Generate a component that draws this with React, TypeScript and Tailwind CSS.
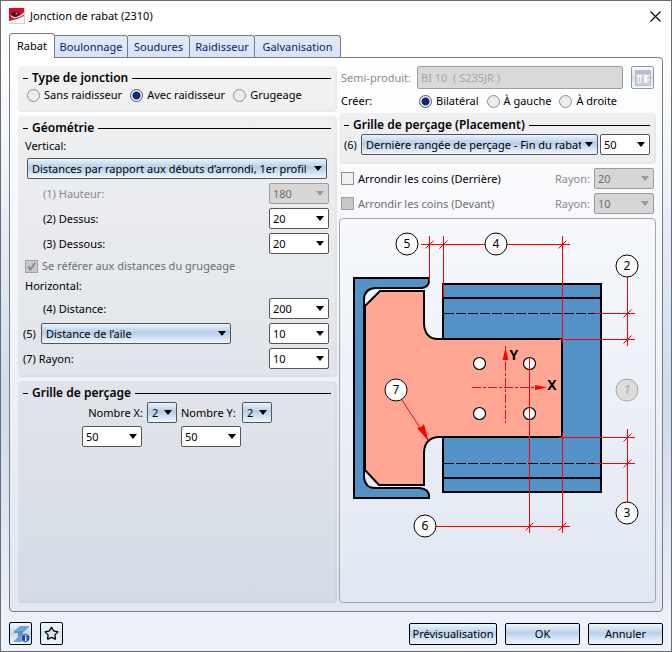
import React from 'react'
import { Star } from 'lucide-react'
import clsx from 'clsx'

interface DropDownProps {
  label: string
  value: string
  variant?: 'edit' | 'list'
  disabled?: boolean
  className?: string
}

function DropDown({ label, value, variant = 'edit', disabled = false, className }: DropDownProps) {
  return (
    <div className={clsx('grid h-[21px] items-center', className)}>
      <select
        aria-label={label}
        disabled={disabled}
        className={clsx(
          '[grid-area:1/1] h-full w-full min-w-0 appearance-none rounded-[2px] border pr-4 leading-4 opacity-100 outline-none',
          variant === 'list' ? 'pl-1' : 'pl-[3px]',
          disabled && 'border-[#9c9c9c] bg-[#d6d6d6] text-[#6d6d6d]',
          !disabled && variant === 'edit' && 'border-[#555] bg-white text-black',
          !disabled &&
            variant === 'list' &&
            'border-[#555] bg-linear-to-b from-[#e9f2fa] from-0% via-[#b5cee9] via-45% to-[#eef8fe] to-100% text-black'
        )}
      >
        <option>{value}</option>
      </select>
      <svg
        viewBox="0 0 8 5"
        className={clsx(
          'pointer-events-none [grid-area:1/1] mr-[5px] h-[5px] w-2 justify-self-end',
          disabled ? 'fill-[#9a9a9a]' : 'fill-black'
        )}
      >
        <path d="M0 0h8L4 5z" />
      </svg>
    </div>
  )
}

function Radio({ name, label, defaultChecked }: { name: string; label: string; defaultChecked?: boolean }) {
  return (
    <label className="flex items-center gap-1 whitespace-nowrap">
      <input
        type="radio"
        name={name}
        defaultChecked={defaultChecked}
        className="size-[13px] shrink-0 appearance-none rounded-full border border-[#8e8e8e] bg-[#ececec] checked:border-[#555] checked:bg-[radial-gradient(circle,#10277a_0_3.5px,#f4f4f4_4.5px)]"
      />
      {label}
    </label>
  )
}

function Check({ label, checked, disabled }: { label: string; checked?: boolean; disabled?: boolean }) {
  return (
    <label className={clsx('flex items-center gap-1 whitespace-nowrap', disabled && 'text-[#6d6d6d]')}>
      <span className="grid size-[13px] shrink-0">
        <input
          type="checkbox"
          defaultChecked={checked}
          disabled={disabled}
          className={clsx(
            '[grid-area:1/1] size-[13px] appearance-none border',
            disabled ? 'border-[#a0a0a0] bg-[#c8c8c8]' : 'border-[#8e8e8e] bg-[#f0f0f0]'
          )}
        />
        {checked && (
          <svg viewBox="0 0 13 13" className="pointer-events-none [grid-area:1/1] size-[13px]">
            <path d="M3 6.5l2.5 3L10 3" fill="none" stroke="#8a8a8a" strokeWidth="2" />
          </svg>
        )}
      </span>
      {label}
    </label>
  )
}

function Group({ title, className, children }: { title: string; className?: string; children: React.ReactNode }) {
  return (
    <section
      className={clsx(
        'rounded-[4px] border border-r-2 border-b-2 border-black/5 border-r-black/8 border-b-black/8 bg-black/5 bg-clip-padding pt-[2px] pr-1 pl-1',
        className
      )}
    >
      <h2 className="flex h-[18px] items-center gap-1 text-[12px] font-semibold whitespace-nowrap">
        <span className="h-px w-[5px] bg-black" />
        {title}
        <span className="h-px flex-1 bg-black" />
      </h2>
      {children}
    </section>
  )
}

function Field({ text, value, disabled, indent }: { text: string; value: string; disabled?: boolean; indent?: boolean }) {
  return (
    <div className="mr-[2px] flex items-center justify-between">
      <span className={clsx(indent && 'pl-5', disabled && 'text-[#8a8a8a]')}>{text}</span>
      <DropDown label={text} value={value} disabled={disabled} className="w-15" />
    </div>
  )
}

function DialogButton({ children }: { children: React.ReactNode }) {
  return (
    <button className="h-[22px] min-w-[75px] rounded-[2px] border border-black bg-linear-to-b from-[#f1f7fc] from-0% via-[#b9d1ea] via-45% to-[#eef8fe] to-100% px-[2px] leading-4">
      {children}
    </button>
  )
}

const balloons = [
  { n: 5, x: 407, y: 244 },
  { n: 4, x: 496, y: 244 },
  { n: 2, x: 627, y: 266 },
  { n: 3, x: 627, y: 513 },
  { n: 6, x: 425, y: 526 },
  { n: 7, x: 396, y: 390 }
]

const holes = [
  [479.5, 363.5],
  [529.5, 363.5],
  [479.5, 413.5],
  [529.5, 413.5]
]

const ticks = [
  [429.5, 244.5],
  [443.5, 244.5],
  [562.5, 244.5],
  [627.5, 313.5],
  [627.5, 339.5],
  [627.5, 437.5],
  [627.5, 463.5],
  [529.5, 526.5],
  [562.5, 526.5]
]

function JointDrawing() {
  return (
    <svg viewBox="341 219 314 382" className="h-[382px] w-[314px] shrink-0" role="img" aria-label="Jonction de rabat">
      {/* channel section */}
      <path
        d="M354 278H429V282Q428 287 422 288H375Q364 289 364 300V477Q365 488 375 488H420Q428 489 429 495V498H354Z"
        fill="#5292c6"
        stroke="#000"
        strokeWidth="2"
      />
      {/* beam */}
      <path d="M443 284H601V492H443Z" fill="#5292c6" stroke="#000" strokeWidth="2" />
      <path d="M443 298H601M443 478H601" stroke="#000" strokeWidth="2" />
      <path d="M444 313.5H594M444 463.5H594" stroke="#000" strokeDasharray="10 2" />
      {/* flap plate */}
      <path
        d="M365 306L380 291H424V324Q425 339 438 339H562V437H438Q425 438 424 452V485H379L365 470Z"
        fill="#ffa794"
        stroke="#000"
        strokeWidth="2"
      />
      {holes.map(([x, y]) => (
        <circle key={`${x}-${y}`} cx={x} cy={y} r="6" fill="#fff" stroke="#000" strokeWidth="1.2" />
      ))}
      {/* local axes */}
      <path d="M505.5 346V423M472 387.5H535" stroke="#f00" strokeDasharray="9 2 3 2" fill="none" />
      <path d="M505.5 348L508.5 360H502.5ZM547 387.5L535 385V390Z" fill="#f00" />
      <g fontWeight="700" fontSize="14" textAnchor="middle">
        <text x="514" y="360">Y</text>
        <text x="552" y="390">X</text>
      </g>
      {/* dimension lines */}
      <path
        d="M421 244.5H485M507 244.5H570M429.5 236V282M443.5 236V298M562.5 236V343M627.5 277V346M594 313.5H635M559 339.5H635M559 437.5H635M594 463.5H635M627.5 429V502M436 526.5H570M529.5 357V533M562.5 433V533"
        stroke="#f00"
        fill="none"
      />
      {ticks.map(([x, y]) => (
        <path key={`${x}-${y}`} d={`M${x - 4} ${y + 4}L${x + 4} ${y - 4}`} stroke="#f00" />
      ))}
      <path d="M402 400L428 440" stroke="#f00" />
      <path d="M428.5 441L417 428L421 427L424 424Z" fill="#f00" />
      {balloons.map((b) => (
        <g key={b.n}>
          <circle cx={b.x} cy={b.y} r="11" fill="#fff" stroke="#000" />
          <text x={b.x} y={b.y + 4} textAnchor="middle" fontSize="12">
            {b.n}
          </text>
        </g>
      ))}
      <circle cx="627" cy="390" r="11" fill="#dcdcdc" stroke="#a5a5a5" />
      <text x="627" y="394" textAnchor="middle" fontSize="12" fontStyle="italic" fill="#a5a5a5">
        1
      </text>
    </svg>
  )
}

function AppLogo() {
  return (
    <svg viewBox="0 0 16 16" className="size-4">
      <path d="M0 0h16v16H0z" fill="#d0d0d0" />
      <path d="M0 0h15v15H0z" fill="#d80a2c" />
      <path d="M5 8Q9 10 15 4V7Q10 10 5 10.5Q2 9 1 7Z" fill="#f3dcdc" />
      <path d="M0 15V13Q8 12 15 8V15Z" fill="#fff" />
      <path d="M2 7Q4 3 8 3.500Q11 5 10 7Q8 9.500 5 9Z" fill="#2a2022" />
      <circle cx="7.5" cy="5.5" r="1" fill="#b8b0b0" />
    </svg>
  )
}

const tabs = ['Boulonnage', 'Soudures', 'Raidisseur', 'Galvanisation']

export default function App() {
  return (
    <div className="flex min-h-screen flex-col border border-[#6b6b6b] bg-linear-to-b from-white from-8% via-[#cddaf0] via-62% to-[#edf2fa] to-97% px-2 pb-[6px] font-['Noto_Sans','Open_Sans',sans-serif] text-[11px] leading-4 text-black">
      <header className="flex h-[30px] items-center gap-[5px]">
        <AppLogo />
        <h1 className="flex-1">Jonction de rabat (2310)</h1>
        <button aria-label="Fermer" className="mr-[2px]">
          <svg viewBox="0 0 11 11" className="size-[11px]">
            <path d="M.5.5l10 10M10.5.5l-10 10" stroke="#000" strokeWidth="1.1" />
          </svg>
        </button>
      </header>

      <nav role="tablist" className="mt-[2px] flex h-6 items-end">
        <button
          role="tab"
          aria-selected="true"
          className="z-10 -mb-px h-[25px] w-[46px] shrink-0 rounded-t-[4px] border border-b-0 border-[#7b7b7b] bg-white"
        >
          Rabat
        </button>
        {tabs.map((t) => (
          <button
            key={t}
            role="tab"
            aria-selected="false"
            className={clsx(
              'h-[22px] shrink-0 rounded-tr-[3px] border border-b-0 border-l-0 border-[#7b7b7b] bg-linear-to-b from-[#e4e9f3] to-[#d6e3ff] text-[#0a1a6e]',
              t === 'Boulonnage' && 'w-[73px]',
              t === 'Soudures' && 'w-[62px]',
              t === 'Raidisseur' && 'w-[65px]',
              t === 'Galvanisation' && 'w-[86px]'
            )}
          >
            {t}
          </button>
        ))}
      </nav>

      <main className="grid flex-1 grid-cols-[319fr_317fr] gap-[2px] rounded-[4px] rounded-tl-none border border-[#7b7b7b] bg-linear-to-b from-white to-[#e0e7f2] py-2 pr-[6px] pl-2">
        <div className="flex flex-col gap-1">
          <Group title="Type de jonction" className="h-[46px]">
            <div className="flex gap-2 pl-1">
              <Radio name="type" label="Sans raidisseur" />
              <Radio name="type" label="Avec raidisseur" defaultChecked />
              <Radio name="type" label="Grugeage" />
            </div>
          </Group>

          <Group title="Géométrie" className="pb-[6px]">
            <div className="flex flex-col gap-1">
              <p className="flex h-[17px] items-end pl-[2px]">Vertical:</p>
              <DropDown
                variant="list"
                label="Vertical"
                value="Distances par rapport aux débuts d’arrondi, 1er profil"
                className="mr-1 ml-1"
              />
              <Field text="(1) Hauteur:" value="180" disabled indent />
              <Field text="(2) Dessus:" value="20" indent />
              <Field text="(3) Dessous:" value="20" indent />
              <div className="flex h-4 items-center pl-[2px]">
                <Check label="Se référer aux distances du grugeage" checked disabled />
              </div>
              <p className="h-4 pl-[2px]">Horizontal:</p>
              <Field text="(4) Distance:" value="200" indent />
              <div className="mr-[2px] flex items-center">
                <span className="w-[18px]">(5)</span>
                <DropDown variant="list" label="Référence (5)" value="Distance de l’aile" className="w-[190px]" />
                <DropDown label="(5)" value="10" className="ml-auto w-15" />
              </div>
              <Field text="(7) Rayon:" value="10" />
            </div>
          </Group>

          <Group title="Grille de perçage" className="flex-1">
            <div className="ml-[59px] flex gap-[39px]">
              <div className="w-15">
                <div className="flex w-[95px] items-center justify-end gap-1 whitespace-nowrap">
                  Nombre X:
                  <DropDown variant="list" label="Nombre X" value="2" className="w-[30px] shrink-0" />
                </div>
                <DropDown label="Entraxe X" value="50" className="mt-[3px] w-15" />
              </div>
              <div className="w-15">
                <div className="flex w-[91px] items-center justify-between whitespace-nowrap">
                  Nombre Y:
                  <DropDown variant="list" label="Nombre Y" value="2" className="w-[30px] shrink-0" />
                </div>
                <DropDown label="Entraxe Y" value="50" className="mt-[3px] w-15" />
              </div>
            </div>
          </Group>
        </div>

        <div className="flex flex-col">
          <div className="flex h-[23px] items-center pr-[2px] pl-[2px]">
            <label htmlFor="semi" className="w-[76px] shrink-0 whitespace-nowrap text-[#8a8a8a]">
              Semi-produit:
            </label>
            <input
              id="semi"
              disabled
              defaultValue="BI 10  ( S235JR )"
              className="h-full min-w-0 flex-1 rounded-[2px] border border-[#9c9c9c] bg-[#d9d9d9] pl-[3px] text-[#a5a5a5]"
            />
            <button
              disabled
              aria-label="Choisir"
              className="ml-2 grid size-[23px] place-items-center rounded-[2px] border border-[#8b99a8] bg-linear-to-b from-[#f6f9fc] via-[#d9e3ee] to-[#f4f9fd]"
            >
              <svg viewBox="0 0 16 16" className="size-4">
                <path d="M0 0h16v16H0z" fill="#b9bec6" />
                <path d="M1 4h14v11H1z" fill="#cdd2da" />
                <path d="M2 5h5v2H6v6H3V7H2zM9 5h5v2h-2v2h2v2h-2v2H9z" fill="#f4f6f9" />
                <path d="M4 7h1v5H4z" fill="#c3c8d0" />
              </svg>
            </button>
          </div>

          <div className="flex h-6 items-center pl-[2px]">
            <span className="w-[78px]">Créer:</span>
            <div className="flex gap-2">
              <Radio name="cote" label="Bilatéral" defaultChecked />
              <Radio name="cote" label="À gauche" />
              <Radio name="cote" label="À droite" />
            </div>
          </div>

          <Group title="Grille de perçage (Placement)" className="h-[51px]">
            <div className="flex items-center">
              <span className="w-[17px]">(6)</span>
              <DropDown
                variant="list"
                label="Placement (6)"
                value="Dernière rangée de perçage - Fin du rabat"
                className="min-w-0 flex-1"
              />
              <DropDown label="(6)" value="50" className="ml-[2px] w-[50px]" />
            </div>
          </Group>

          <div className="my-1 flex flex-col gap-1 pr-[2px] pl-[2px]">
            <div className="flex items-center">
              <Check label="Arrondir les coins (Derrière)" />
              <span className="mr-1 ml-auto text-[#8a8a8a]">Rayon:</span>
              <DropDown label="Rayon derrière" value="20" disabled className="w-15" />
            </div>
            <div className="flex items-center">
              <Check label="Arrondir les coins (Devant)" disabled />
              <span className="mr-1 ml-auto text-[#8a8a8a]">Rayon:</span>
              <DropDown label="Rayon devant" value="10" disabled className="w-15" />
            </div>
          </div>

          <div className="flex flex-1 justify-center rounded-[4px] border border-[#a6a6a6]">
            <JointDrawing />
          </div>
        </div>
      </main>

      <footer className="mt-[10px] flex items-center gap-2">
        <button
          aria-label="Informations"
          className="grid size-[23px] place-items-center rounded-[2px] border border-black bg-linear-to-b from-[#f1f7fc] via-[#c3d8ec] to-[#eef8fe]"
        >
          <svg viewBox="0 0 18 18" className="size-[18px]">
            <path d="M2 6L8 1H17L13 6L11 7V11L15 14L9 17H1L6 12V8Z" fill="#6fa6d6" />
            <path d="M2 6H11L17 1V2L11 7V11L6 12V8H2Z" fill="#5a93c6" />
            <circle cx="13.5" cy="13" r="4.2" fill="#2346b8" stroke="#aebde8" strokeWidth="0.8" />
            <path d="M13 10h1.5v1.5H13zM13 12.2h1.5V16H13z" fill="#fff" />
          </svg>
        </button>
        <button
          aria-label="Favoris"
          className="grid size-[23px] place-items-center rounded-[2px] border border-black bg-linear-to-b from-[#f1f7fc] via-[#d3e5f3] to-[#eef8fe]"
        >
          <Star size={15} strokeWidth={2} strokeLinejoin="miter" />
        </button>
        <div className="ml-auto grid grid-cols-[88px_75px_75px] gap-2">
          <DialogButton>Prévisualisation</DialogButton>
          <DialogButton>OK</DialogButton>
          <DialogButton>Annuler</DialogButton>
        </div>
      </footer>
    </div>
  )
}
